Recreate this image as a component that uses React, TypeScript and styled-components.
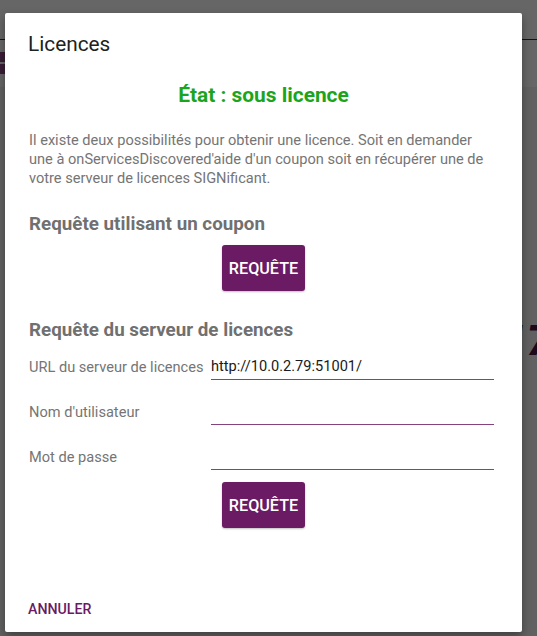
import React from "react";
import styled, { createGlobalStyle } from "styled-components";

const GlobalStyle = createGlobalStyle`
  html, body {
    margin: 0;
    padding: 0;
    width: 100%;
    height: 100%;
    overflow: hidden;
  }
  body {
    font-family: Roboto, "Noto Sans", "Liberation Sans", sans-serif;
    background: #f0f0f0;
  }
  #root {
    height: 100%;
  }
`;

const PURPLE = "#6a1b64";

type Field = {
  label: string;
  value?: string;
};

const fields: Field[] = [
  { label: "URL du serveur de licences", value: "http://10.0.2.79:51001/" },
  { label: "Nom d'utilisateur" },
  { label: "Mot de passe" },
];

// the dialog text wraps exactly like this on the device
const introLines = [
  "Il existe deux possibilités pour obtenir une licence. Soit en demander",
  "une à onServicesDiscovered'aide d'un coupon soit en récupérer une de",
  "votre serveur de licences SIGNificant.",
];

const App = () => {
  return (
    <>
      <GlobalStyle />
      <Screen>
        {/* the activity sitting behind the dialog */}
        <AppHeader />
        <BrandStrip>
          <BrandBar />
          <BrandBar />
        </BrandStrip>
        <Backdrop>
          <BigYear>2017</BigYear>
        </Backdrop>

        <Scrim>
          <Dialog>
            <Title>Licences</Title>
            <Status>État : sous licence</Status>
            <Intro>
              {introLines.map((line) => (
                <IntroLine key={line}>{line}</IntroLine>
              ))}
            </Intro>

            <SectionTitle>Requête utilisant un coupon</SectionTitle>
            <ButtonRow>
              <RequestButton>REQUÊTE</RequestButton>
            </ButtonRow>

            <SectionTitle $gap={27}>Requête du serveur de licences</SectionTitle>
            <Form>
              {fields.map((f) => (
                <FieldRow key={f.label}>
                  <FieldLabel>{f.label}</FieldLabel>
                  <FieldInput defaultValue={f.value ?? ""} />
                </FieldRow>
              ))}
            </Form>
            <ButtonRow $gap={12}>
              <RequestButton>REQUÊTE</RequestButton>
            </ButtonRow>

            <Footer>
              <TextButton>ANNULER</TextButton>
            </Footer>
          </Dialog>
        </Scrim>
      </Screen>
    </>
  );
};

export default App;

const Screen = styled.div`
  position: relative;
  width: 537px;
  height: 636px;
  overflow: hidden;
  background: #f2f2f2;
`;

const AppHeader = styled.header`
  height: 39px;
  background: #ffffff;
  border-bottom: 1px solid #333;
`;

const BrandStrip = styled.div`
  height: 35px;
  padding-top: 12px;
  background: #ffffff;
  display: flex;
  flex-direction: column;
  gap: 2px;
`;

const BrandBar = styled.div`
  width: 40px;
  height: 10px;
  background: #8e4d89;
`;

const Backdrop = styled.div`
  display: flex;
  justify-content: flex-end;
  padding-top: 228px;
  margin-right: -14px;
`;

const BigYear = styled.div`
  font-size: 43px;
  line-height: 50px;
  font-weight: 900;
  font-style: italic;
  color: #4a1446;
`;

const Scrim = styled.div`
  position: absolute;
  inset: 0;
  background: rgba(0, 0, 0, 0.6);
  display: flex;
  padding: 13px 15px 4px 5px;
  box-sizing: border-box;
`;

const Dialog = styled.div`
  flex: 1;
  display: flex;
  flex-direction: column;
  background: #ffffff;
  border-radius: 2px;
  box-shadow: 0 4px 10px rgba(0, 0, 0, 0.35);
  padding: 19px 28px 13px 23px;
  box-sizing: border-box;
`;

const Title = styled.h2`
  margin: 0;
  font-size: 20.8px;
  line-height: 24px;
  font-weight: 400;
  color: #212121;
`;

/* centred on the dialog, not on the (asymmetric) content box */
const Status = styled.div`
  margin: 27px -5px 0 0;
  text-align: center;
  font-size: 20.9px;
  line-height: 24px;
  font-weight: 700;
  color: #1ca51c;
`;

const Intro = styled.p`
  margin: 24px 0 0 1px;
  font-size: 14.6px;
  line-height: 19px;
  color: #757575;
`;

const IntroLine = styled.span`
  display: block;
  white-space: nowrap;
`;

const SectionTitle = styled.h3<{ $gap?: number }>`
  margin: ${(p) => p.$gap ?? 24}px 0 0 1px;
  font-size: 18.8px;
  line-height: 24px;
  font-weight: 700;
  color: #707070;
`;

const ButtonRow = styled.div<{ $gap?: number }>`
  margin: ${(p) => p.$gap ?? 9}px -5px 0 0;
  display: flex;
  justify-content: center;
`;

const RequestButton = styled.button`
  width: 83px;
  height: 46px;
  border: none;
  border-radius: 3px;
  background: ${PURPLE};
  color: #ffffff;
  font-family: Roboto, sans-serif;
  font-size: 16.2px;
  font-weight: 500;
  padding: 0;
  box-shadow: 0 1px 2px rgba(0, 0, 0, 0.25);
`;

const Form = styled.div`
  margin-top: 11px;
  display: flex;
  flex-direction: column;
  gap: 18px;
`;

const FieldRow = styled.div`
  display: grid;
  grid-template-columns: 183px 1fr;
  align-items: center;
  height: 27px;
`;

const FieldLabel = styled.label`
  padding-left: 1px;
  font-size: 14.6px;
  color: #757575;
  white-space: nowrap;
`;

const FieldInput = styled.input`
  height: 27px;
  box-sizing: border-box;
  border: none;
  border-bottom: 1px solid #85427f;
  outline: none;
  padding: 0;
  font-family: Roboto, sans-serif;
  font-size: 14.6px;
  color: #1a1a1a;
  background: transparent;
`;

const Footer = styled.div`
  margin-top: auto;
`;

const TextButton = styled.button`
  border: none;
  background: transparent;
  padding: 0;
  font-family: Roboto, sans-serif;
  font-size: 14.2px;
  line-height: 20px;
  font-weight: 500;
  color: ${PURPLE};
`;
